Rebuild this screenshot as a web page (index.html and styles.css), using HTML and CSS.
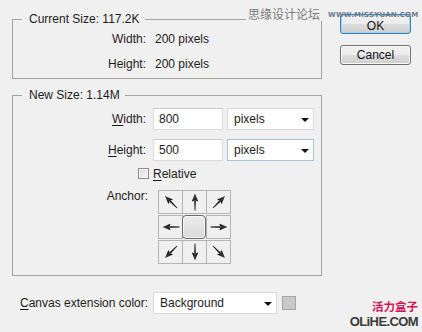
FILE: index.html
```html
<!DOCTYPE html>
<html>
<head>
<meta charset="utf-8">
<link rel="stylesheet" href="styles.css">
</head>
<body>
<svg class="defs" width="0" height="0">
  <defs>
    <linearGradient id="ag" x1="0" y1="0" x2="1" y2="0">
      <stop offset="0" stop-color="#000"/>
      <stop offset="0.5" stop-color="#3a3a3a"/>
      <stop offset="1" stop-color="#000"/>
    </linearGradient>
    <symbol id="arrow" viewBox="0 0 24 24">
      <path d="M12 3.5 L15.2 11.5 L12 10.6 L8.8 11.5 Z" fill="url(#ag)"/>
      <path d="M11.2 10.8 L12.8 10.8 L12.4 20.5 L11.6 20.5 Z" fill="#111"/>
    </symbol>
  </defs>
</svg>
<div class="dialog">
  <div class="main">
    <fieldset class="group current">
      <legend>Current Size: 117.2K</legend>
      <div class="info">
        <span class="lbl">Width:</span><span>200 pixels</span>
        <span class="lbl">Height:</span><span>200 pixels</span>
      </div>
    </fieldset>
    <fieldset class="group newsize">
      <legend>New Size: 1.14M</legend>
      <div class="fields">
        <span class="lbl"><u>W</u>idth:</span>
        <div class="input">800</div>
        <div class="select">pixels<span class="caret"></span></div>
        <span class="lbl"><u>H</u>eight:</span>
        <div class="input">500</div>
        <div class="select focus">pixels<span class="caret"></span></div>
      </div>
      <div class="relative"><span class="check"></span><span><u>R</u>elative</span></div>
      <div class="anchor-row">
        <span class="lbl anchor-lbl">Anchor:</span>
        <div class="anchor">
          <div class="cell"><svg width="24" height="24"><use href="#arrow" transform="rotate(-45 12 12)"/></svg></div>
          <div class="cell"><svg width="24" height="24"><use href="#arrow"/></svg></div>
          <div class="cell"><svg width="24" height="24"><use href="#arrow" transform="rotate(45 12 12)"/></svg></div>
          <div class="cell"><svg width="24" height="24"><use href="#arrow" transform="rotate(-90 12 12)"/></svg></div>
          <div class="cell center"><span class="knob"></span></div>
          <div class="cell"><svg width="24" height="24"><use href="#arrow" transform="rotate(90 12 12)"/></svg></div>
          <div class="cell"><svg width="24" height="24"><use href="#arrow" transform="rotate(-135 12 12)"/></svg></div>
          <div class="cell"><svg width="24" height="24"><use href="#arrow" transform="rotate(180 12 12)"/></svg></div>
          <div class="cell"><svg width="24" height="24"><use href="#arrow" transform="rotate(135 12 12)"/></svg></div>
        </div>
      </div>
    </fieldset>
    <div class="ext-row">
      <span class="ext-lbl"><u>C</u>anvas extension color:</span>
      <div class="select wide">Background<span class="caret"></span></div>
      <span class="swatch"></span>
    </div>
  </div>
  <div class="buttons">
    <button class="btn ok">OK</button>
    <button class="btn">Cancel</button>
  </div>
</div>
<div class="wm-top"><span class="wm-cn">思缘设计论坛</span><span class="wm-url">WWW.MISSYUAN.COM</span></div>
<div class="wm-bottom"><div class="wm-olihe-cn">活力盒子</div><div class="wm-olihe">OLiHE.COM</div></div>
</body>
</html>
```
FILE: styles.css
```css
html, body {
  margin: 0;
  padding: 0;
}
body {
  width: 422px;
  height: 332px;
  overflow: hidden;
  position: relative;
  background: #f0f0f0;
  font-family: "Liberation Sans", Arial, sans-serif;
  font-size: 12px;
  color: #1c1c1c;
}
.defs {
  position: absolute;
  width: 0;
  height: 0;
}
u {
  text-decoration: underline;
  text-underline-offset: 2px;
}
.dialog {
  display: flex;
  padding-left: 12px;
}
.main {
  width: 310px;
}
.group {
  margin: 0;
  padding: 0;
  border: 1px solid #a3a3a3;
  min-width: 0;
}
.group legend {
  margin-left: 9px;
  padding: 0 5px 0 7px;
  line-height: 14px;
}
.current {
  margin-top: 12px;
  padding-bottom: 2px;
}
.newsize {
  margin-top: 9px;
  padding-bottom: 11px;
}
.lbl {
  text-align: right;
}
.info {
  display: grid;
  grid-template-columns: 133px auto;
  column-gap: 9px;
  grid-auto-rows: 25px;
  align-items: center;
}
.fields {
  margin-top: 6px;
  display: grid;
  grid-template-columns: 136px 70px 87px;
  column-gap: 4px;
  row-gap: 9px;
  align-items: center;
}
.fields .lbl {
  padding-right: 3px;
}
.input {
  height: 22px;
  box-sizing: border-box;
  background: #fff;
  border: 1px solid #dcdcdc;
  border-top-color: #c9c9c9;
  padding-left: 5px;
  line-height: 20px;
}
.select {
  position: relative;
  height: 22px;
  box-sizing: border-box;
  background: #fff;
  border: 1px solid #dadada;
  padding-left: 6px;
  line-height: 20px;
}
.select.focus {
  border-color: #a9c3dd;
}
.caret {
  position: absolute;
  right: 4px;
  top: 9px;
  width: 0;
  height: 0;
  border-left: 4px solid transparent;
  border-right: 4px solid transparent;
  border-top: 4px solid #111;
}
.relative {
  margin-top: 6px;
  margin-left: 125px;
  display: flex;
  align-items: center;
  gap: 4px;
  height: 13px;
}
.check {
  width: 11px;
  height: 11px;
  box-sizing: border-box;
  border: 1px solid #8e8f8f;
  background: linear-gradient(135deg, #dcdcdc, #f6f6f6);
  box-shadow: inset 0 0 0 1px #f4f4f4;
}
.anchor-row {
  margin-top: 10px;
  display: flex;
  align-items: flex-start;
}
.anchor-lbl {
  width: 135px;
  line-height: 12px;
}
.anchor {
  margin-left: 10px;
  display: grid;
  grid-template-columns: repeat(3, 24px);
  grid-template-rows: repeat(3, 24px);
  row-gap: 1px;
}
.cell {
  width: 25px;
  height: 24px;
  box-sizing: border-box;
  border: 1px solid #b4b4b4;
  display: flex;
  align-items: center;
  justify-content: center;
}
.cell svg {
  display: block;
  flex: none;
}
.cell.center {
  border: none;
  width: 24px;
}
.knob {
  width: 24px;
  height: 24px;
  box-sizing: border-box;
  border: 1px solid #6b6b6b;
  border-radius: 4px;
  background: linear-gradient(#ececec, #dadada);
  box-shadow: inset 0 0 0 1px #f7f7f7;
}
.ext-row {
  margin-top: 16px;
  padding-left: 8px;
  display: flex;
  align-items: center;
}
.ext-lbl {
  flex: none;
  width: 133px;
  white-space: nowrap;
}
.select.wide {
  flex: none;
  width: 124px;
}
.swatch {
  flex: none;
  margin-left: 5px;
  width: 14px;
  height: 14px;
  box-sizing: border-box;
  border: 1px solid #a6a6a6;
  background: #c9c9c9;
}
.buttons {
  margin-left: 18px;
  padding-top: 14px;
  display: flex;
  flex-direction: column;
  gap: 11px;
}
.btn {
  width: 71px;
  height: 20px;
  box-sizing: border-box;
  padding: 0;
  font-family: "Liberation Sans", Arial, sans-serif;
  font-size: 12px;
  color: #111;
  border: 1px solid #707070;
  border-radius: 3px;
  background: linear-gradient(#f2f2f2, #ebebeb 50%, #dddddd 50%, #cfcfcf);
  box-shadow: inset 0 0 0 1px #fbfbfb;
}
.btn.ok {
  border-color: #3c7fb1;
  box-shadow: inset 0 0 0 1px #9fd5f2;
  padding-top: 3px;
}
.wm-top {
  position: absolute;
  left: 246px;
  top: 6px;
  display: flex;
  align-items: flex-start;
  gap: 6px;
}
.wm-cn {
  font-family: "Noto Sans CJK SC", sans-serif;
  font-size: 12px;
  line-height: 15px;
  color: #7b7b7b;
  background: #f0f0f0;
  padding: 0 2px;
}
.wm-url {
  font-family: "DejaVu Sans", sans-serif;
  font-size: 7px;
  line-height: 7px;
  font-weight: bold;
  color: #6f7c8c;
  letter-spacing: 0.2px;
  margin-top: 6px;
}
.wm-bottom {
  position: absolute;
  right: 4px;
  bottom: 3px;
  text-align: right;
}
.wm-olihe-cn {
  font-family: "Noto Sans CJK SC", sans-serif;
  font-size: 11.5px;
  line-height: normal;
  font-weight: bold;
  color: #d0195c;
}
.wm-olihe {
  font-family: "Liberation Sans", Arial, sans-serif;
  font-size: 13px;
  line-height: normal;
  font-weight: bold;
  letter-spacing: -0.6px;
  color: #3a3a3a;
}
```
